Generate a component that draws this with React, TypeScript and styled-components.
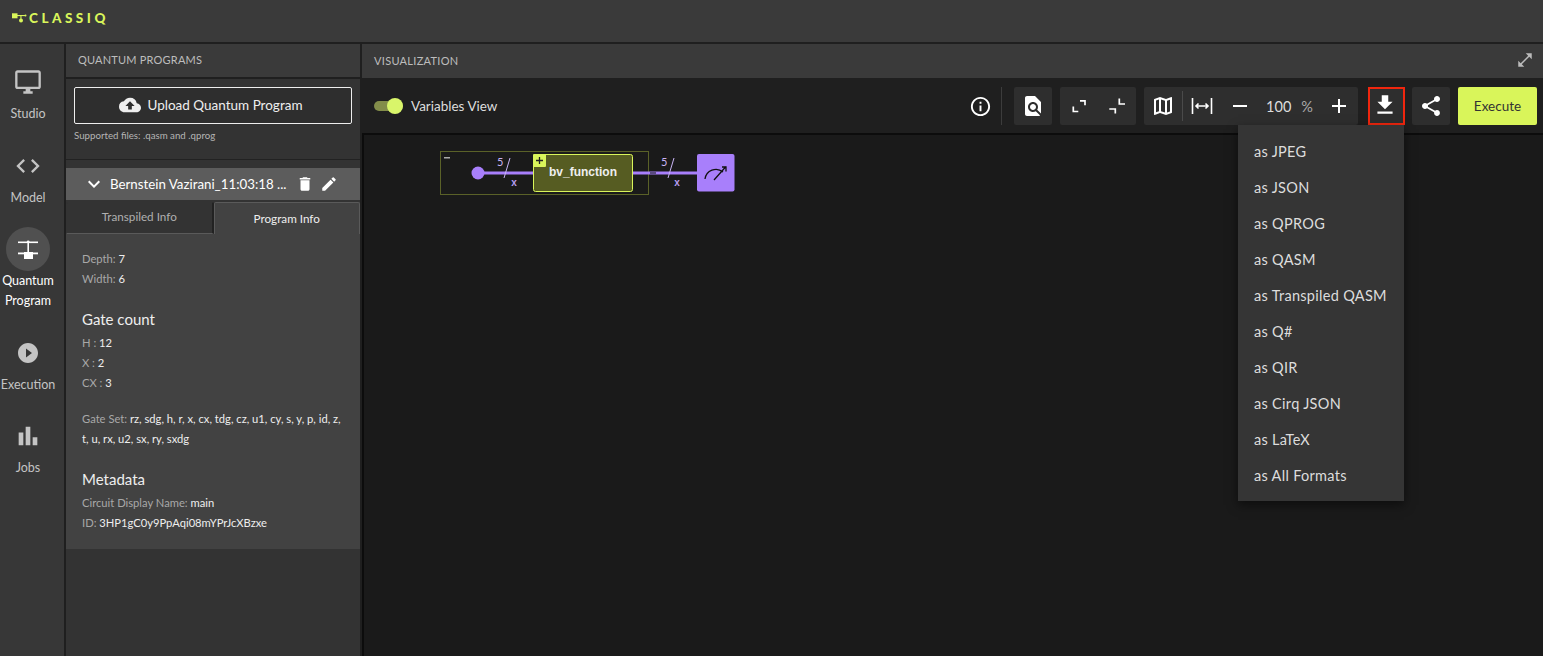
import styled, { createGlobalStyle } from "styled-components";
import {
  MdOutlineDesktopWindows, MdCode, MdPlayCircleFilled, MdBarChart, MdCloudUpload,
  MdDelete, MdEdit, MdExpandMore, MdInfoOutline, MdFindInPage,
  MdOutlineMap, MdRemove, MdAdd, MdFileDownload, MdShare, MdOutlineOpenInFull,
} from "react-icons/md";

const GlobalStyle = createGlobalStyle`
  html, body { margin: 0; padding: 0; height: 100%; background: #1c1c1c; }
  * { box-sizing: border-box; }
  body { font-family: "Lato", "Liberation Sans", sans-serif; overflow: hidden; }
`;

const navItems = [
  { label: ["Studio"], icon: <MdOutlineDesktopWindows size={28} /> },
  { label: ["Model"], icon: <MdCode size={28} /> },
  { label: ["Quantum", "Program"], icon: <QuantumIcon />, active: true },
  { label: ["Execution"], icon: <MdPlayCircleFilled size={24} /> },
  { label: ["Jobs"], icon: <MdBarChart size={28} /> },
];

const formats = ["as JPEG", "as JSON", "as QPROG", "as QASM", "as Transpiled QASM", "as Q#", "as QIR", "as Cirq JSON", "as LaTeX", "as All Formats"];

function QuantumIcon() {
  return (
    <svg width="24" height="24" viewBox="0 0 24 24" fill="#fff">
      <rect x="2" y="4.5" width="20" height="1.6" />
      <rect x="2" y="15.5" width="20" height="1.8" />
      <rect x="11.4" y="4" width="1.6" height="12" />
      <circle cx="12.2" cy="4.8" r="1.4" />
      <rect x="8" y="15" width="9" height="7" />
    </svg>
  );
}

function ExpandIcon() {
  return (
    <svg width="24" height="24" viewBox="0 0 24 24" fill="none" stroke="#fff" strokeWidth="1.7">
      <path d="M13 6.8h5v4.5M6.3 12.5v5h5" />
    </svg>
  );
}

function CollapseIcon() {
  return (
    <svg width="24" height="24" viewBox="0 0 24 24" fill="none" stroke="#fff" strokeWidth="1.7">
      <path d="M14.3 4.5v5.5H20M4.3 15h6v4.5" />
    </svg>
  );
}

function Logo() {
  return (
    <LogoRow>
      <svg width="15" height="10" viewBox="0 0 15 10" fill="#d9f55a">
        <rect x="0" y="0.3" width="5.5" height="5" />
        <rect x="5" y="2" width="8.5" height="1.1" />
        <circle cx="13.5" cy="2.5" r="1" />
        <rect x="8.4" y="2" width="1.1" height="5" />
        <circle cx="9" cy="7.5" r="2" />
      </svg>
      <LogoText>CLASSIQ</LogoText>
    </LogoRow>
  );
}

function Circuit() {
  return (
    <CircuitSvg width="320" height="70" viewBox="430 140 320 70">
      <rect x="440.5" y="151.5" width="208" height="43" fill="none" stroke="#5a6128" />
      <rect x="444" y="157" width="6" height="1.5" fill="#aaa" />
      <line x1="478" y1="173" x2="533" y2="173" stroke="#a87ffb" strokeWidth="3" />
      <line x1="632" y1="173" x2="697" y2="173" stroke="#a87ffb" strokeWidth="3" />
      <line x1="650" y1="173" x2="656" y2="173" stroke="#5a4a80" strokeWidth="3" />
      <circle cx="478" cy="173" r="6.5" fill="#a87ffb" />
      <line x1="510" y1="158" x2="504" y2="178" stroke="#c9b4f5" />
      <line x1="674" y1="158" x2="668" y2="178" stroke="#c9b4f5" />
      <WireText x="497" y="166">5</WireText>
      <WireText x="661" y="166">5</WireText>
      <WireName x="514" y="186">x</WireName>
      <WireName x="677" y="186">x</WireName>
      <rect x="533.5" y="154.5" width="99" height="37" rx="2" fill="#565c22" stroke="#d9f55a" />
      <rect x="533" y="154" width="13" height="13" rx="1" fill="#d9f55a" />
      <path d="M536 160.5h7M539.5 157v7" stroke="#222" strokeWidth="1.3" />
      <BlockName x="583" y="176">bv_function</BlockName>
      <rect x="697" y="154" width="37.5" height="37.5" rx="2" fill="#a87ffb" />
      <path d="M705 179A11 11 0 0 1 723 172" fill="none" stroke="#111" strokeWidth="1.3" />
      <path d="M714 180L726 166.5M722 167h4v4.5" fill="none" stroke="#111" strokeWidth="1.3" />
    </CircuitSvg>
  );
}

export default function App() {
  return (
    <Page>
      <GlobalStyle />
      <TopBar><Logo /></TopBar>
      <Body>
        <Sidebar>
          {navItems.map((item) => (
            <NavItem key={item.label[0]} $active={item.active}>
              <NavIcon $active={item.active}>{item.icon}</NavIcon>
              {item.label.map((l) => <NavLabel key={l}>{l}</NavLabel>)}
            </NavItem>
          ))}
        </Sidebar>

        <Programs>
          <PanelHeader>QUANTUM PROGRAMS</PanelHeader>
          <UploadArea>
            <UploadButton><MdCloudUpload size={22} />Upload Quantum Program</UploadButton>
            <Hint>Supported files: .qasm and .qprog</Hint>
          </UploadArea>
          <ProgramRow>
            <MdExpandMore size={24} />
            <ProgramName>Bernstein Vazirani_11:03:18 ...</ProgramName>
            <MdDelete size={18} />
            <MdEdit size={18} />
          </ProgramRow>
          <Tabs>
            <Tab>Transpiled Info</Tab>
            <Tab $active>Program Info</Tab>
          </Tabs>
          <Info>
            <InfoLine>Depth: <b>7</b></InfoLine>
            <InfoLine>Width: <b>6</b></InfoLine>
            <InfoTitle>Gate count</InfoTitle>
            <InfoLine>H : <b>12</b></InfoLine>
            <InfoLine>X : <b>2</b></InfoLine>
            <InfoLine>CX : <b>3</b></InfoLine>
            <GateSet>Gate Set: <b>rz, sdg, h, r, x, cx, tdg, cz, u1, cy, s, y, p, id, z, t, u, rx, u2, sx, ry, sxdg</b></GateSet>
            <InfoTitle>Metadata</InfoTitle>
            <InfoLine>Circuit Display Name: <b>main</b></InfoLine>
            <InfoLine>ID: <b>3HP1gC0y9PpAqi08mYPrJcXBzxe</b></InfoLine>
          </Info>
        </Programs>

        <Visual>
          <VisualHeader>
            VISUALIZATION
            <MdOutlineOpenInFull size={18} color="#bbb" />
          </VisualHeader>
          <Toolbar>
            <Toggle><Knob /></Toggle>
            <ToggleLabel>Variables View</ToggleLabel>
            <Spacer />
            <MdInfoOutline size={23} color="#fff" />
            <Divider />
            <Group><IconBtn><MdFindInPage size={24} /></IconBtn></Group>
            <Group>
              <IconBtn><ExpandIcon /></IconBtn>
              <IconBtn><CollapseIcon /></IconBtn>
            </Group>
            <Group>
              <IconBtn><MdOutlineMap size={24} /></IconBtn>
              <GroupLine />
              <IconBtn>
                <svg width="22" height="16" viewBox="0 0 22 16" fill="none" stroke="#fff" strokeWidth="1.6">
                  <path d="M1.5 0v16M20.5 0v16M5 8h12M7.5 5.5L5 8l2.5 2.5M14.5 5.5L17 8l-2.5 2.5" />
                </svg>
              </IconBtn>
              <IconBtn><MdRemove size={24} /></IconBtn>
              <Zoom>100<ZoomUnit>%</ZoomUnit></Zoom>
              <IconBtn><MdAdd size={24} /></IconBtn>
            </Group>
            <DownloadBtn><MdFileDownload size={26} /></DownloadBtn>
            <Group><IconBtn><MdShare size={24} /></IconBtn></Group>
            <Execute>Execute</Execute>
            <Menu>
              {formats.map((f) => <MenuItem key={f}>{f}</MenuItem>)}
            </Menu>
          </Toolbar>
          <Canvas><Circuit /></Canvas>
        </Visual>
      </Body>
    </Page>
  );
}

const Page = styled.div`
  width: 1543px;
  height: 656px;
  display: flex;
  flex-direction: column;
  overflow: hidden;
  background: #1c1c1c;
`;

const TopBar = styled.div`
  height: 44px;
  flex: none;
  display: flex;
  align-items: center;
  padding: 0 12px 6px;
  background: #3a3a3a;
  border-bottom: 2px solid #1f1f1f;
`;

const LogoRow = styled.div`
  display: flex;
  align-items: center;
  gap: 2px;
`;

const LogoText = styled.span`
  color: #d9f55a;
  font-size: 13.5px;
  line-height: 14px;
  font-weight: 900;
  letter-spacing: 3.5px;
`;

const Body = styled.div`
  flex: 1;
  display: flex;
  min-height: 0;
`;

const Sidebar = styled.nav`
  width: 66px;
  flex: none;
  display: flex;
  flex-direction: column;
  gap: 19.5px;
  padding: 16px 8px 0 0;
  background: #373737;
  border-right: 2px solid #1f1f1f;
`;

const NavItem = styled.div<{ $active?: boolean }>`
  display: flex;
  flex-direction: column;
  align-items: center;
  color: ${(p) => (p.$active ? "#fff" : "#c4c4c4")};
`;

const NavIcon = styled.div<{ $active?: boolean }>`
  width: 44px;
  height: 44px;
  border-radius: 50%;
  display: flex;
  align-items: center;
  justify-content: center;
  background: ${(p) => (p.$active ? "#505050" : "transparent")};
`;

const NavLabel = styled.div`
  font-size: 12.5px;
  line-height: 20px;
`;

const Programs = styled.section`
  width: 296px;
  flex: none;
  display: flex;
  flex-direction: column;
  background: #333;
  border-right: 2px solid #1f1f1f;
`;

const PanelHeader = styled.div`
  height: 35px;
  flex: none;
  display: flex;
  align-items: center;
  padding: 0 0 2px 12px;
  font-size: 11px;
  letter-spacing: 0.2px;
  color: #bdbdbd;
  background: #3a3a3a;
  border-bottom: 2px solid #1f1f1f;
`;

const UploadArea = styled.div`
  height: 81px;
  flex: none;
  padding: 8px 8px 0;
  border-bottom: 1px solid #222;
`;

const UploadButton = styled.div`
  height: 37px;
  display: flex;
  align-items: center;
  justify-content: center;
  gap: 6px;
  padding: 0 4px 1px 0;
  color: #eee;
  font-size: 13.5px;
  border: 1px solid #eee;
  border-radius: 2px;
  background: #2e2e2e;
`;

const Hint = styled.div`
  margin-top: 5px;
  font-size: 9.7px;
  color: #b5b5b5;
`;

const ProgramRow = styled.div`
  height: 32px;
  flex: none;
  margin-top: 8px;
  display: flex;
  align-items: center;
  gap: 6px;
  padding-left: 16px;
  color: #fff;
  background: #5c5c5c;
`;

const ProgramName = styled.div`
  width: 180px;
  margin-left: -2px;
  font-size: 13.3px;
  white-space: nowrap;
`;

const Tabs = styled.div`
  height: 34px;
  flex: none;
  display: flex;
  padding-top: 2px;
`;

const Tab = styled.div<{ $active?: boolean }>`
  flex: 1;
  display: flex;
  align-items: center;
  justify-content: center;
  padding-bottom: ${(p) => (p.$active ? "2px" : "4px")};
  font-size: 11.7px;
  color: ${(p) => (p.$active ? "#eee" : "#b0b0b0")};
  background: ${(p) => (p.$active ? "#424242" : "#333")};
  border-radius: 2px 2px 0 0;
  border: 1px solid ${(p) => (p.$active ? "#5a5a5a" : "#333")};
  border-bottom: ${(p) => (p.$active ? "none" : "1px solid #5a5a5a")};
  border-right: ${(p) => (p.$active ? "1px solid #5a5a5a" : "2px solid #222")};
`;

const Info = styled.div`
  height: 315px;
  flex: none;
  padding: 15px 16px 0;
  background: #424242;
`;

const InfoLine = styled.div`
  font-size: 11.2px;
  line-height: 20px;
  color: #a8a8a8;
  & b { font-weight: 400; color: #eee; }
`;

const InfoTitle = styled.div`
  margin-top: 16px;
  font-size: 15px;
  line-height: 28px;
  color: #eee;
`;

const GateSet = styled(InfoLine)`
  margin-top: 16px;
`;

const Visual = styled.section`
  flex: 1;
  min-width: 0;
  display: flex;
  flex-direction: column;
`;

const VisualHeader = styled.div`
  height: 34px;
  flex: none;
  display: flex;
  align-items: center;
  justify-content: space-between;
  padding: 0 9px 2px 12px;
  font-size: 11px;
  letter-spacing: 0.3px;
  color: #bdbdbd;
  background: #3a3a3a;
`;

const Toolbar = styled.div`
  position: relative;
  height: 55px;
  flex: none;
  display: flex;
  align-items: center;
  gap: 8px;
  padding: 1px 6px 0 12px;
  background: #1f1f1f;
`;

const Toggle = styled.div`
  width: 29px;
  height: 10px;
  position: relative;
  border-radius: 5px;
  background: #838d4a;
`;

const Knob = styled.div`
  position: absolute;
  right: 0;
  top: -3px;
  width: 16px;
  height: 16px;
  border-radius: 50%;
  background: #d9f56a;
`;

const ToggleLabel = styled.div`
  font-size: 13.5px;
  color: #ddd;
`;

const Spacer = styled.div`
  flex: 1;
`;

const Divider = styled.div`
  width: 1px;
  height: 38px;
  margin: 0 4px 0 1px;
  background: #3c3c3c;
`;

const Group = styled.div`
  height: 38px;
  display: flex;
  align-items: center;
  border-radius: 2px;
  background: #2e2e2e;
`;

const GroupLine = styled.div`
  width: 1px;
  height: 30px;
  background: #4a4a4a;
`;

const IconBtn = styled.div`
  width: 38px;
  height: 38px;
  display: flex;
  align-items: center;
  justify-content: center;
  color: #fff;
`;

const Zoom = styled.div`
  width: 61px;
  display: flex;
  justify-content: center;
  gap: 10px;
  font-size: 14.5px;
  color: #ddd;
`;

const ZoomUnit = styled.span`
  color: #aaa;
`;

const DownloadBtn = styled(IconBtn)`
  width: 37px;
  height: 38px;
  margin: 0 -1px 0 2px;
  padding: 0 3px 2px 0;
  background: #2e2e2e;
  border: 2px solid #f0260e;
`;

const Execute = styled.div`
  width: 79px;
  height: 38px;
  display: flex;
  align-items: center;
  justify-content: center;
  font-size: 13.5px;
  color: #333;
  background: #d9f55a;
  border-radius: 2px;
`;

const Menu = styled.div`
  position: absolute;
  top: 47px;
  left: 876px;
  width: 166px;
  padding: 9px 0 7px;
  z-index: 2;
  background: #353535;
  box-shadow: 0 4px 10px rgba(0, 0, 0, 0.5);
`;

const MenuItem = styled.div`
  height: 36px;
  display: flex;
  align-items: center;
  padding: 0 0 2px 16px;
  font-size: 14.5px;
  letter-spacing: 0.3px;
  color: #ddd;
`;

const Canvas = styled.div`
  flex: 1;
  min-height: 0;
  padding-left: 66px;
  background: #1a1a1a;
  border-top: 2px solid #0c0c0c;
  border-left: 2px solid #0c0c0c;
`;

const CircuitSvg = styled.svg`
  display: block;
  margin-top: 5px;
`;

const WireText = styled.text`
  font-family: "Lato", sans-serif;
  font-size: 11px;
  fill: #c9b4f5;
`;

const WireName = styled.text`
  font-family: "Liberation Sans", sans-serif;
  font-size: 10px;
  font-weight: 700;
  fill: #b79cf0;
  text-anchor: middle;
`;

const BlockName = styled.text`
  font-family: "Liberation Sans", sans-serif;
  font-size: 12px;
  font-weight: 700;
  fill: #eee;
  text-anchor: middle;
`;
